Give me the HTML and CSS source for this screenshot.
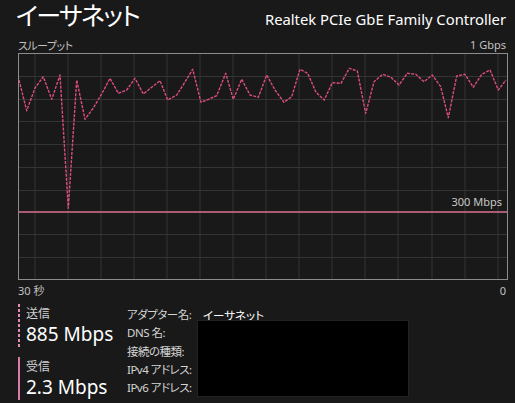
FILE: index.html
```html
<!DOCTYPE html>
<html lang="ja">
<head>
<meta charset="utf-8">
<title>イーサネット</title>
<link rel="stylesheet" href="styles.css">
</head>
<body>
<div class="page">
  <header class="header">
    <h1 class="title">イーサネット</h1>
    <div class="device">Realtek PCIe GbE Family Controller</div>
  </header>
  <div class="axis axis-top">
    <span class="jp">スループット</span>
    <span>1 Gbps</span>
  </div>
  <div class="graph">
    <svg class="chart" width="488" height="225" viewBox="19 54 488 225" xmlns="http://www.w3.org/2000/svg">
      <g class="grid">
        <line x1="35" y1="54" x2="35" y2="279"/>
        <line x1="68" y1="54" x2="68" y2="279"/>
        <line x1="101" y1="54" x2="101" y2="279"/>
        <line x1="134" y1="54" x2="134" y2="279"/>
        <line x1="167" y1="54" x2="167" y2="279"/>
        <line x1="200" y1="54" x2="200" y2="279"/>
        <line x1="233" y1="54" x2="233" y2="279"/>
        <line x1="266" y1="54" x2="266" y2="279"/>
        <line x1="299" y1="54" x2="299" y2="279"/>
        <line x1="332" y1="54" x2="332" y2="279"/>
        <line x1="365" y1="54" x2="365" y2="279"/>
        <line x1="398" y1="54" x2="398" y2="279"/>
        <line x1="432" y1="54" x2="432" y2="279"/>
        <line x1="465" y1="54" x2="465" y2="279"/>
        <line x1="498" y1="54" x2="498" y2="279"/>
        <line x1="19" y1="76.5" x2="507" y2="76.5"/>
        <line x1="19" y1="99.5" x2="507" y2="99.5"/>
        <line x1="19" y1="121.5" x2="507" y2="121.5"/>
        <line x1="19" y1="144.5" x2="507" y2="144.5"/>
        <line x1="19" y1="167.5" x2="507" y2="167.5"/>
        <line x1="19" y1="190.5" x2="507" y2="190.5"/>
        <line x1="19" y1="234.5" x2="507" y2="234.5"/>
        <line x1="19" y1="257.5" x2="507" y2="257.5"/>
      </g>
      <line class="recv" x1="19" y1="212" x2="507" y2="212"/>
      <text class="scale" x="502" y="206" text-anchor="end">300 Mbps</text>
      <polyline class="send" points="18,76 26.7,110.7 35,88 43.3,76.7 51.7,99.3 60,75 68.3,208.3 76.7,80 85,119.3 93.3,108 101.7,94 110,78.3 118.3,93.3 126.7,90 135,78.3 143.3,94 151.7,87.3 160,80.7 167.7,100 176.7,95 185,82 192.7,69.3 201,102.3 209.3,99 216.7,95.7 225.7,73.3 233.3,99.3 241.7,79.3 250,95 258.3,97.3 266.7,75 275,90 284,102.3 291.7,96.7 300,69.3 307.7,73.3 316,92.3 324.3,100 332.3,82.7 341,83.3 349.3,68.3 357.3,71 365.7,113.3 374,81.7 382.7,74.3 391,77.3 399,85 407.3,73.3 415.7,74.3 424,81.7 432.3,75 440.7,86.7 448.3,117.7 456.7,76 465,74.3 473.3,87.3 481.7,74.3 490,70 498.3,90 506,80"/>
    </svg>
  </div>
  <div class="axis axis-bottom">
    <span>30 秒</span>
    <span>0</span>
  </div>
  <div class="details">
    <div class="legend">
      <div class="stat stat-send">
        <span class="bar bar-dashed"></span>
        <div class="stat-text">
          <div class="stat-label">送信</div>
          <div class="stat-value">885 Mbps</div>
        </div>
      </div>
      <div class="stat stat-recv">
        <span class="bar bar-solid"></span>
        <div class="stat-text">
          <div class="stat-label">受信</div>
          <div class="stat-value">2.3 Mbps</div>
        </div>
      </div>
    </div>
    <div class="props">
      <div class="prop-label">アダプター名:</div>
      <div class="prop-value">イーサネット</div>
      <div class="prop-label">DNS 名:</div>
      <div class="prop-label">接続の種類:</div>
      <div class="prop-label">IPv4 アドレス:</div>
      <div class="prop-label">IPv6 アドレス:</div>
      <div class="redact"></div>
    </div>
  </div>
</div>
</body>
</html>
```
FILE: styles.css
```css
html, body {
  margin: 0;
  padding: 0;
  background: #191919;
}
body {
  font-family: "Noto Sans", "Noto Sans CJK JP", sans-serif;
  font-feature-settings: "palt";
  color: #d6d6d6;
  width: 515px;
  height: 403px;
  overflow: hidden;
}
.page {
  padding: 0 8px 0 18px;
}
.header {
  display: flex;
  justify-content: space-between;
  align-items: baseline;
  height: 37px;
}
.title {
  margin: 0 0 0 -2px;
  font-family: "Noto Sans CJK JP", sans-serif;
  font-feature-settings: "palt";
  font-weight: 400;
  font-size: 25px;
  letter-spacing: -1.6px;
  line-height: 28px;
  color: #ffffff;
}
.device {
  font-size: 14.8px;
  color: #ffffff;
  margin-right: 1px;
}
.axis {
  display: flex;
  justify-content: space-between;
  font-size: 11px;
  line-height: 16px;
  color: #c2c2c2;
}
.jp {
  font-family: "Noto Sans CJK JP", sans-serif;
  letter-spacing: -0.5px;
}
.axis-top {
  margin-right: 1px;
}
.graph {
  width: 488px;
  height: 225px;
  border: 1px solid #8c8c8c;
}
.chart {
  display: block;
}
.grid line {
  stroke: #343434;
  stroke-width: 1;
}
.recv {
  stroke: #d9728f;
  stroke-width: 1.5;
}
.send {
  fill: none;
  stroke: #db4c82;
  stroke-width: 1.4;
  stroke-dasharray: 3 1.2;
  stroke-linejoin: round;
}
.scale {
  font-family: "Noto Sans", sans-serif;
  font-size: 11px;
  fill: #c8c8c8;
}
.axis-bottom {
  margin-top: 3px;
  margin-right: 1px;
}
.details {
  display: flex;
  margin-top: 5px;
}
.legend {
  width: 109px;
  display: flex;
  flex-direction: column;
  gap: 10px;
}
.stat {
  display: flex;
  gap: 6px;
}
.bar {
  width: 2px;
  flex: none;
}
.bar-dashed {
  background: repeating-linear-gradient(to bottom, #e68ab7 0 3px, transparent 3px 5px);
}
.bar-solid {
  background: #d97aa8;
}
.stat-label {
  font-family: "Noto Sans CJK JP", sans-serif;
  font-size: 12px;
  line-height: 17px;
  color: #d0d0d0;
}
.stat-value {
  font-size: 19px;
  line-height: 26px;
  color: #ffffff;
}
.props {
  display: grid;
  grid-template-columns: 70px 212px;
  grid-auto-rows: 18.3px;
  font-size: 11.5px;
  line-height: 18.3px;
  margin-top: 2px;
}
.prop-label {
  grid-column: 1;
  color: #d4d4d4;
  white-space: nowrap;
  letter-spacing: -0.5px;
}
.prop-value {
  grid-column: 2;
  grid-row: 1;
  padding-left: 6px;
  color: #ffffff;
  white-space: nowrap;
  font-family: "Noto Sans CJK JP", sans-serif;
}
.redact {
  grid-column: 2;
  grid-row: 2 / 6;
  background: #000000;
  border: 1px solid #222222;
  margin-top: -4px;
}
```
